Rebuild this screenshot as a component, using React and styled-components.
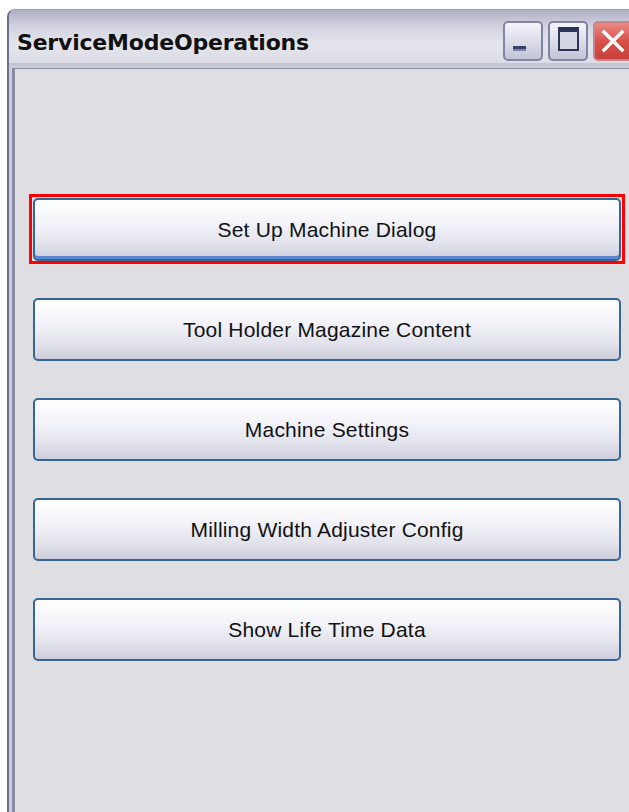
import styled, { createGlobalStyle } from 'styled-components';

const operations = [
  'Set Up Machine Dialog',
  'Tool Holder Magazine Content',
  'Machine Settings',
  'Milling Width Adjuster Config',
  'Show Life Time Data',
];

const App = () => {
  return (
    <>
      <GlobalStyle />
      <Window>
        <TitleBar>
          <Title>ServiceModeOperations</Title>
          <CaptionButtons>
            <CaptionButton aria-label='Minimize'>
              <MinGlyph />
            </CaptionButton>
            <CaptionButton aria-label='Maximize'>
              <MaxGlyph />
            </CaptionButton>
            <CaptionButton close aria-label='Close'>
              <svg width='26' height='26' viewBox='0 0 26 26'>
                <path
                  d='M4 4 L22 22 M22 4 L4 22'
                  stroke='#fff'
                  strokeWidth='3.5'
                  strokeLinecap='square'
                />
              </svg>
            </CaptionButton>
          </CaptionButtons>
        </TitleBar>
        <Client>
          {operations.map((name, i) => (
            <OpButton key={name} focused={i === 0}>
              {name}
            </OpButton>
          ))}
        </Client>
      </Window>
    </>
  );
};

export default App;

const GlobalStyle = createGlobalStyle`
  html, body {
    margin: 0;
    padding: 0;
    background: #ffffff;
    overflow: hidden;
  }
  body {
    height: 812px;
  }
`;

const Window = styled.div`
  margin: 9px 0 0 7px;
  width: 640px;
  height: 803px;
  display: flex;
  flex-direction: column;
  background: #cacad8;
  border-radius: 8px 8px 0 0;
  border-left: 2px solid #6f6f88;
  border-top: 1px solid #9a9aae;
  box-sizing: border-box;
  overflow: hidden;
`;

const TitleBar = styled.div`
  height: 55px;
  flex-shrink: 0;
  display: flex;
  align-items: center;
  justify-content: space-between;
  padding: 0 0 0 8px;
  background: linear-gradient(
    to bottom,
    #b0b0c4 0%,
    #d2d2e0 30%,
    #e4e4ec 60%,
    #dcdce6 100%
  );
  box-shadow: inset 0 -2px 0 #c4c4d2;
`;

const Title = styled.span`
  font-family: 'DejaVu Sans', sans-serif;
  font-weight: bold;
  font-size: 22px;
  letter-spacing: -0.2px;
  color: #111;
  padding-top: 9px;
`;

const CaptionButtons = styled.div`
  display: flex;
  gap: 5px;
  padding-top: 6px;
  margin-right: 14px;
`;

const CaptionButton = styled.div`
  width: 40px;
  height: 40px;
  box-sizing: border-box;
  border-radius: 5px;
  display: flex;
  align-items: center;
  justify-content: center;
  position: relative;
  border: 2px solid ${(p) => (p.close ? '#c9848a' : '#7f84a3')};
  background: ${(p) =>
    p.close
      ? 'linear-gradient(to bottom, #e98a84 0%, #d8514a 50%, #c8403a 100%)'
      : 'linear-gradient(to bottom, #f4f4fa 0%, #d8d9e6 60%, #c2c4d6 100%)'};
`;

const MinGlyph = styled.span`
  position: absolute;
  left: 8px;
  bottom: 8px;
  width: 13px;
  height: 5px;
  background: #3a3f66;
  box-shadow: inset 0 -2px 0 #7d82a8;
`;

const MaxGlyph = styled.span`
  width: 21px;
  height: 24px;
  box-sizing: border-box;
  border: 2px solid #2e3358;
  border-top-width: 5px;
  margin-top: -4px;
  background: #d4d6e4;
`;

const Client = styled.div`
  flex: 1;
  display: flex;
  flex-direction: column;
  gap: 37px;
  padding: 130px 0 0 18px;
  margin: 3px 0 0 3px;
  background: #dfdfe3;
  border-left: 3px solid #8a8aa2;
  box-shadow: inset 0 1px 0 #8c8ca4;
`;

const OpButton = styled.div`
  position: relative;
  width: 588px;
  height: 63px;
  box-sizing: border-box;
  display: flex;
  align-items: center;
  justify-content: center;
  border: 2px solid #386693;
  border-radius: 5px;
  background: linear-gradient(
    to bottom,
    #ffffff 0%,
    #f2f2f8 40%,
    #e2e2ec 75%,
    #cdcddc 100%
  );
  font-family: 'Liberation Sans', Arial, sans-serif;
  font-size: 21px;
  letter-spacing: 0.2px;
  color: #111;
  box-shadow: ${(p) => (p.focused ? 'inset 0 -3px 0 #5b86d2' : 'none')};

  /* focus rectangle drawn around the active button */
  &::after {
    content: '';
    display: ${(p) => (p.focused ? 'block' : 'none')};
    position: absolute;
    inset: -6px -6px -5px -6px;
    border: 3px solid #ff0000;
  }
`;
